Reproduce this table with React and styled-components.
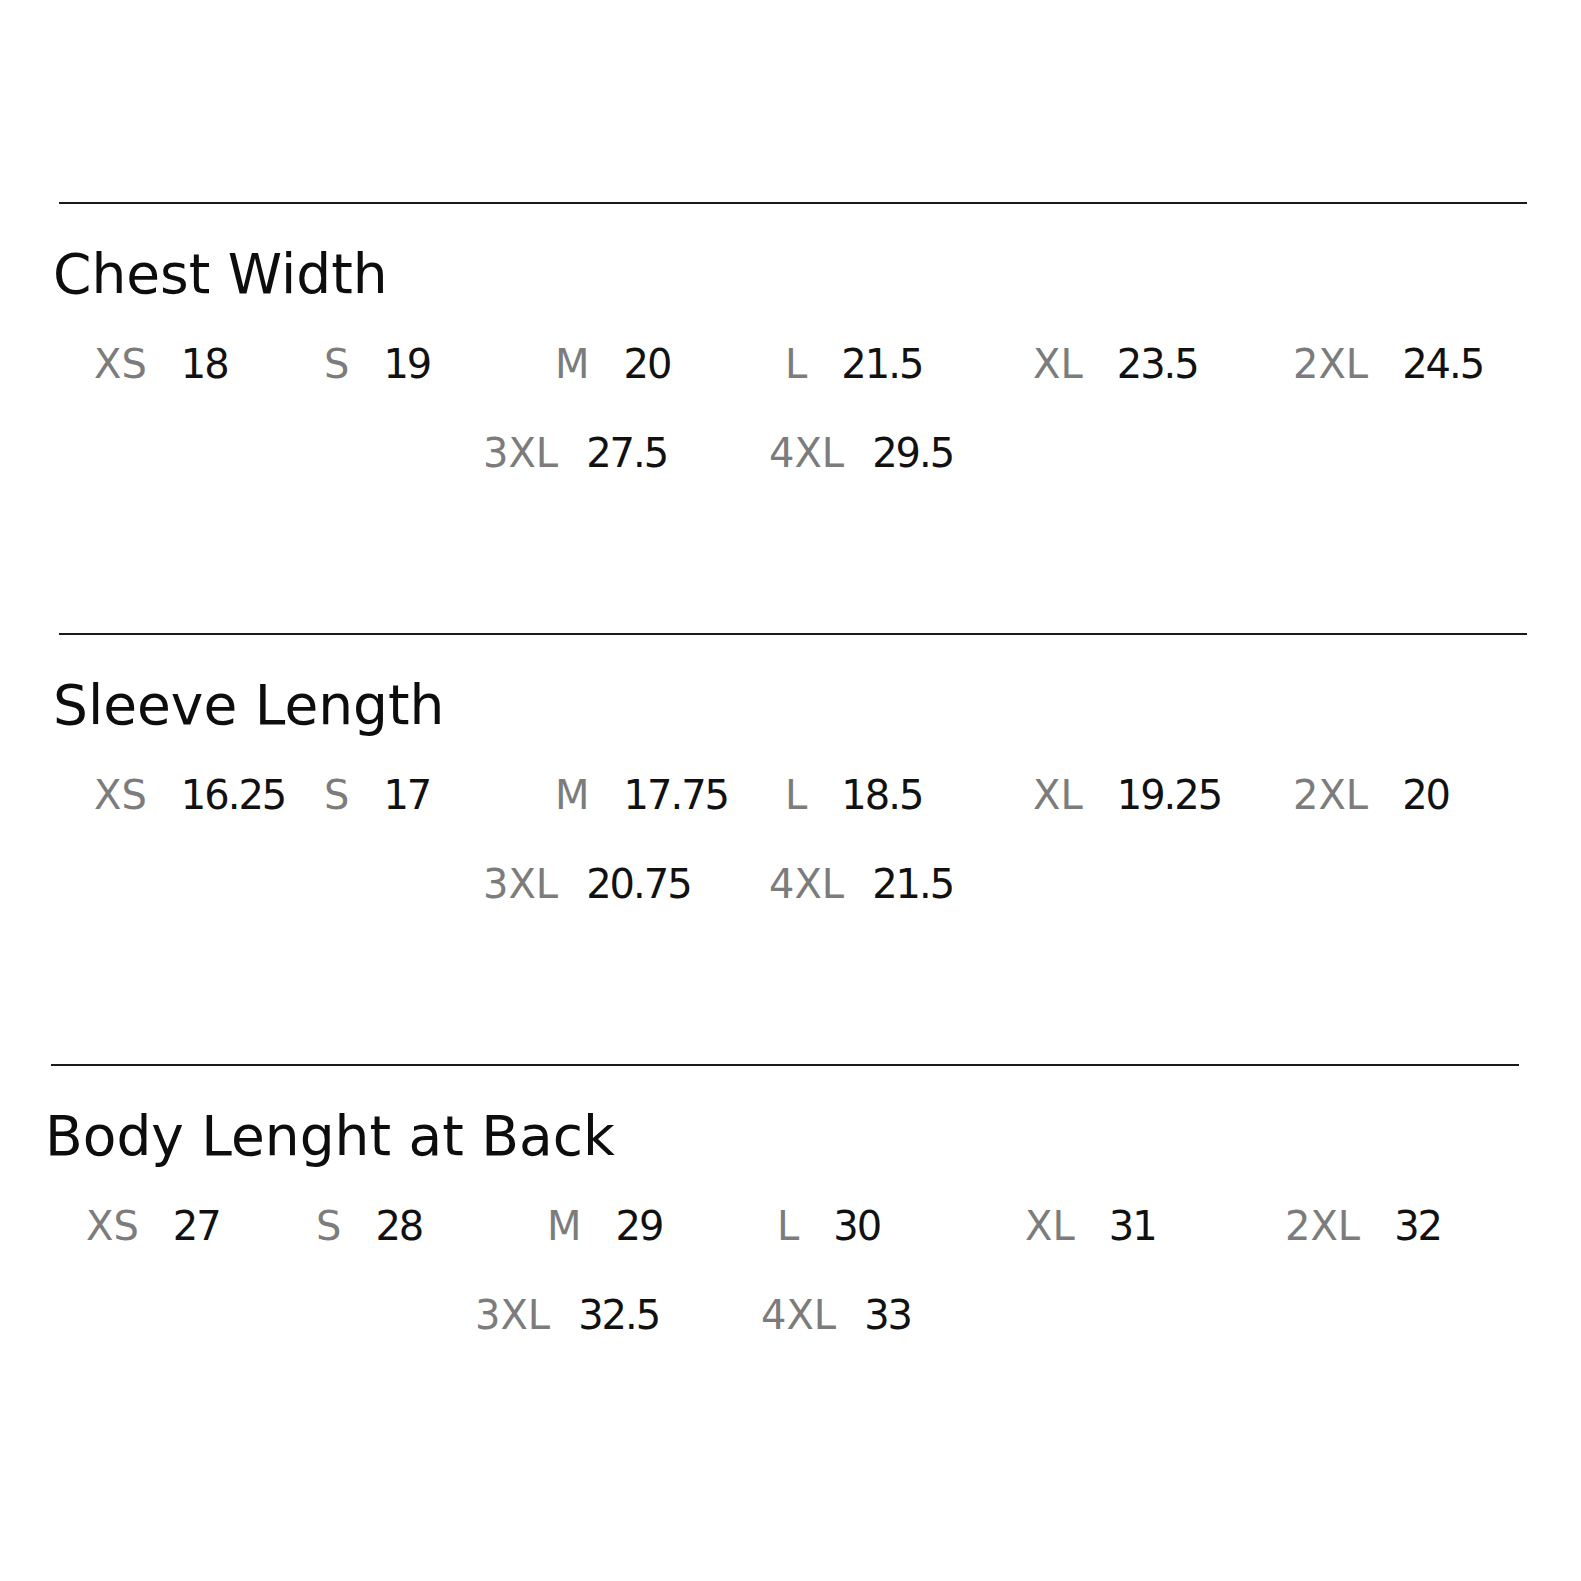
import React from "react";
import styled, { createGlobalStyle } from "styled-components";

const GlobalStyle = createGlobalStyle`
  html, body {
    margin: 0;
    padding: 0;
    background: #fff;
  }
  body {
    font-family: "DejaVu Sans", "Noto Sans", sans-serif;
    color: #111;
  }
`;

const charts = [
  {
    title: "Chest Width",
    shift: 0,
    top: ["18", "19", "20", "21.5", "23.5", "24.5"],
    bottom: ["27.5", "29.5"],
  },
  {
    title: "Sleeve Length",
    shift: 0,
    top: ["16.25", "17", "17.75", "18.5", "19.25", "20"],
    bottom: ["20.75", "21.5"],
  },
  {
    title: "Body Lenght at Back",
    shift: -8,
    top: ["27", "28", "29", "30", "31", "32"],
    bottom: ["32.5", "33"],
  },
];

const topSizes = ["XS", "S", "M", "L", "XL", "2XL"];
const bottomSizes = ["3XL", "4XL"];

export default function App() {
  return (
    <Page>
      <GlobalStyle />
      {charts.map((c) => (
        <Section key={c.title} $shift={c.shift}>
          <Rule />
          <Title>{c.title}</Title>
          <Row $cols="230px 231px 230px 248px 260px auto" $indent={41}>
            {topSizes.map((s, i) => (
              <Item key={s} $gap={34}>
                <Label>{s}</Label>
                <Value>{c.top[i]}</Value>
              </Item>
            ))}
          </Row>
          <Row $cols="286px auto" $indent={430}>
            {bottomSizes.map((s, i) => (
              <Item key={s} $gap={28}>
                <Label>{s}</Label>
                <Value>{c.bottom[i]}</Value>
              </Item>
            ))}
          </Row>
        </Section>
      ))}
    </Page>
  );
}

const Page = styled.div`
  width: 1581px;
  height: 1581px;
  padding: 202px 0 0 53px;
  box-sizing: border-box;
  display: flex;
  flex-direction: column;
`;

const Section = styled.section`
  display: flex;
  flex-direction: column;
  margin-left: ${(p) => p.$shift}px;
  height: 431px;
`;

const Rule = styled.div`
  margin-left: 6px;
  width: 1468px;
  border-top: 2px solid #1a1a1a;
`;

const Title = styled.h2`
  margin: 37px 0 0;
  font-size: 55px;
  line-height: 66px;
  font-weight: 400;
  color: #0d0d0d;
`;

const Row = styled.div`
  display: grid;
  grid-template-columns: ${(p) => p.$cols};
  padding-left: ${(p) => p.$indent}px;
  margin-top: 33px;
  & + & {
    margin-top: 41px;
  }
`;

const Item = styled.div`
  display: flex;
  gap: ${(p) => p.$gap}px;
  font-size: 40px;
  line-height: 48px;
`;

const Label = styled.span`
  color: #7c7c7c;
`;

const Value = styled.span`
  color: #111;
  letter-spacing: -2px;
`;
